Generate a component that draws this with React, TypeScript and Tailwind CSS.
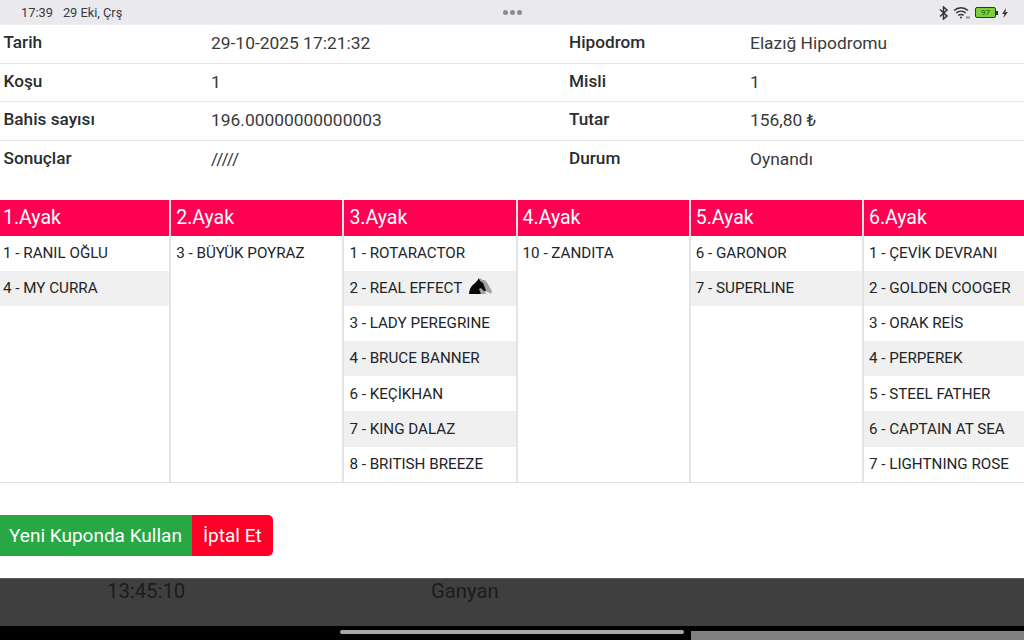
const info = [
  ["Tarih", "29-10-2025 17:21:32", "Hipodrom", "Elazığ Hipodromu"],
  ["Koşu", "1", "Misli", "1"],
  ["Bahis sayısı", "196.00000000000003", "Tutar", "156,80 ₺"],
  ["Sonuçlar", "/////", "Durum", "Oynandı"],
];

const legs: { title: string; rows: string[]; horse?: number }[] = [
  { title: "1.Ayak", rows: ["1 - RANIL OĞLU", "4 - MY CURRA"] },
  { title: "2.Ayak", rows: ["3 - BÜYÜK POYRAZ"] },
  {
    title: "3.Ayak",
    rows: ["1 - ROTARACTOR", "2 - REAL EFFECT", "3 - LADY PEREGRINE", "4 - BRUCE BANNER", "6 - KEÇİKHAN", "7 - KING DALAZ", "8 - BRITISH BREEZE"],
    horse: 1,
  },
  { title: "4.Ayak", rows: ["10 - ZANDITA"] },
  { title: "5.Ayak", rows: ["6 - GARONOR", "7 - SUPERLINE"] },
  {
    title: "6.Ayak",
    rows: ["1 - ÇEVİK DEVRANI", "2 - GOLDEN COOGER", "3 - ORAK REİS", "4 - PERPEREK", "5 - STEEL FATHER", "6 - CAPTAIN AT SEA", "7 - LIGHTNING ROSE"],
  },
];

function Horse() {
  return (
    <svg width="24" height="20" viewBox="0 0 24 20" className="ml-[7px] -mt-[3px] shrink-0">
      <path d="M10 3l2-2 1 2 3 0 3 4 2 4 2 3-1 3-3-2-3-1 1 3H9z" fill="#a2a2a2" />
      <path d="M0 17c0-4 2-8 5-10l3-3 2-3 1 3 3 2 2 5 1 3-2 0-3-3-2 1 2 5z" fill="#080808" />
    </svg>
  );
}

function Bluetooth() {
  return (
    <svg width="10" height="14" viewBox="0 0 10 14" fill="none" stroke="#333" strokeWidth="1.5">
      <path d="M1 3.5l7 6.5-3.5 3V1L8 4 1 10.5" />
    </svg>
  );
}

function Wifi() {
  return (
    <svg width="17" height="13" viewBox="0 0 17 13" fill="none" stroke="#333" strokeWidth="1.5">
      <path d="M1 4.5c4-3.6 10-3.6 14 0" />
      <path d="M3.2 7c2.8-2.4 6.8-2.4 9.6 0" />
      <path d="M5.4 9.4c1.6-1.2 3.6-1.2 5.2 0" />
      <circle cx="8" cy="11.4" r="1" fill="#333" stroke="none" />
      <path d="M14 10.5v2M16 10.5v2" strokeWidth="1" />
    </svg>
  );
}

export default function App() {
  return (
    <div className="w-[1024px] h-[640px] overflow-hidden flex flex-col bg-white font-['Roboto',sans-serif] text-[#212529]">
      <div className="h-[25px] shrink-0 bg-[#e9e9ee] border-b border-[#f1f1f4] relative flex items-center pl-[21px] pr-[16px] pt-[1px] text-[12.8px] text-[#3a3a3f]">
        <span>17:39</span>
        <span className="ml-[10px]">29 Eki, Çrş</span>
        <div className="absolute left-[503px] top-[10px] flex gap-[2px]">
          <span className="w-[5px] h-[5px] rounded-full bg-[#8b8b90]" />
          <span className="w-[5px] h-[5px] rounded-full bg-[#8b8b90]" />
          <span className="w-[5px] h-[5px] rounded-full bg-[#8b8b90]" />
        </div>
        <div className="ml-auto flex items-center gap-[4px]">
          <Bluetooth />
          <Wifi />
          <div className="ml-[1px] flex items-center">
            <div className="w-[21px] h-[11px] border border-[#333] rounded-[2px] bg-[#78d03c] text-[8px] leading-[9px] text-center text-[#245010]">
              97
            </div>
            <div className="w-[2px] h-[4px] bg-[#333]" />
          </div>
          <svg width="6" height="10" viewBox="0 0 6 10" fill="#444">
            <path d="M4 0L0 6h2.2L1.5 10 6 4H3.6z" />
          </svg>
        </div>
      </div>

      <div className="h-[175px] shrink-0 pt-[0.6px]">
        {info.map((r, i) => (
          <div
            key={r[0]}
            className={`flex items-center h-[38.4px] pb-[2px] text-[17.4px] ${i < 3 ? "border-b border-[#e6e6e6]" : ""}`}
          >
            <div className="w-[211px] pl-[3.5px] font-medium text-[17.2px] text-[#2a2d30]">{r[0]}</div>
            <div className="w-[358px] text-[#3a3a3a]">{r[1]}</div>
            <div className="w-[181px] font-medium text-[17.2px] text-[#2a2d30]">{r[2]}</div>
            <div className="text-[#3a3a3a]">{r[3]}</div>
          </div>
        ))}
      </div>

      <div className="h-[283px] shrink-0 flex -ml-[2px] w-[1039px] border-b border-[#dedede]">
        {legs.map((leg) => (
          <div key={leg.title} className="w-[173.2px] shrink-0 flex flex-col border-r-2 border-[#e4e4e4]">
            <div className="h-[36px] bg-[#ff0052] text-white text-[19.5px] flex items-center pb-[1px] pl-[5px]">
              {leg.title}
            </div>
            {leg.rows.map((row, i) => (
              <div
                key={row}
                className={`h-[35.1px] flex items-center pl-[5px] text-[15.2px] text-[#212529] ${i % 2 ? "bg-[#f0f0f0]" : "bg-white"}`}
              >
                <span>{row}</span>
                {leg.horse === i ? <Horse /> : null}
              </div>
            ))}
          </div>
        ))}
      </div>

      <div className="h-[95px] shrink-0 flex items-start pt-[32px]">
        <button className="h-[41px] pl-[9px] pr-[10px] pt-[1px] bg-[#28a745] text-white text-[19px]">Yeni Kuponda Kullan</button>
        <button className="h-[41px] px-[11px] pt-[1px] bg-[#ff0026] text-white text-[19px] rounded-r-[5px]">İptal Et</button>
      </div>

      <div className="h-[48px] shrink-0 bg-[#3f3f3f] border-t border-[#5a5a5a] flex items-start text-[20.3px] leading-[24px] text-[#1c1c1c]">
        <span className="w-[324px] ml-[107px]">13:45:10</span>
        <span>Ganyan</span>
      </div>

      <div className="flex-1 bg-black relative">
        <div className="absolute left-[340px] top-[4px] w-[344px] h-[4px] rounded-full bg-[#a8a8a8]" />
        <div className="absolute left-[691px] top-[5px] right-0 bottom-0 bg-[#808080]" />
      </div>
    </div>
  );
}
